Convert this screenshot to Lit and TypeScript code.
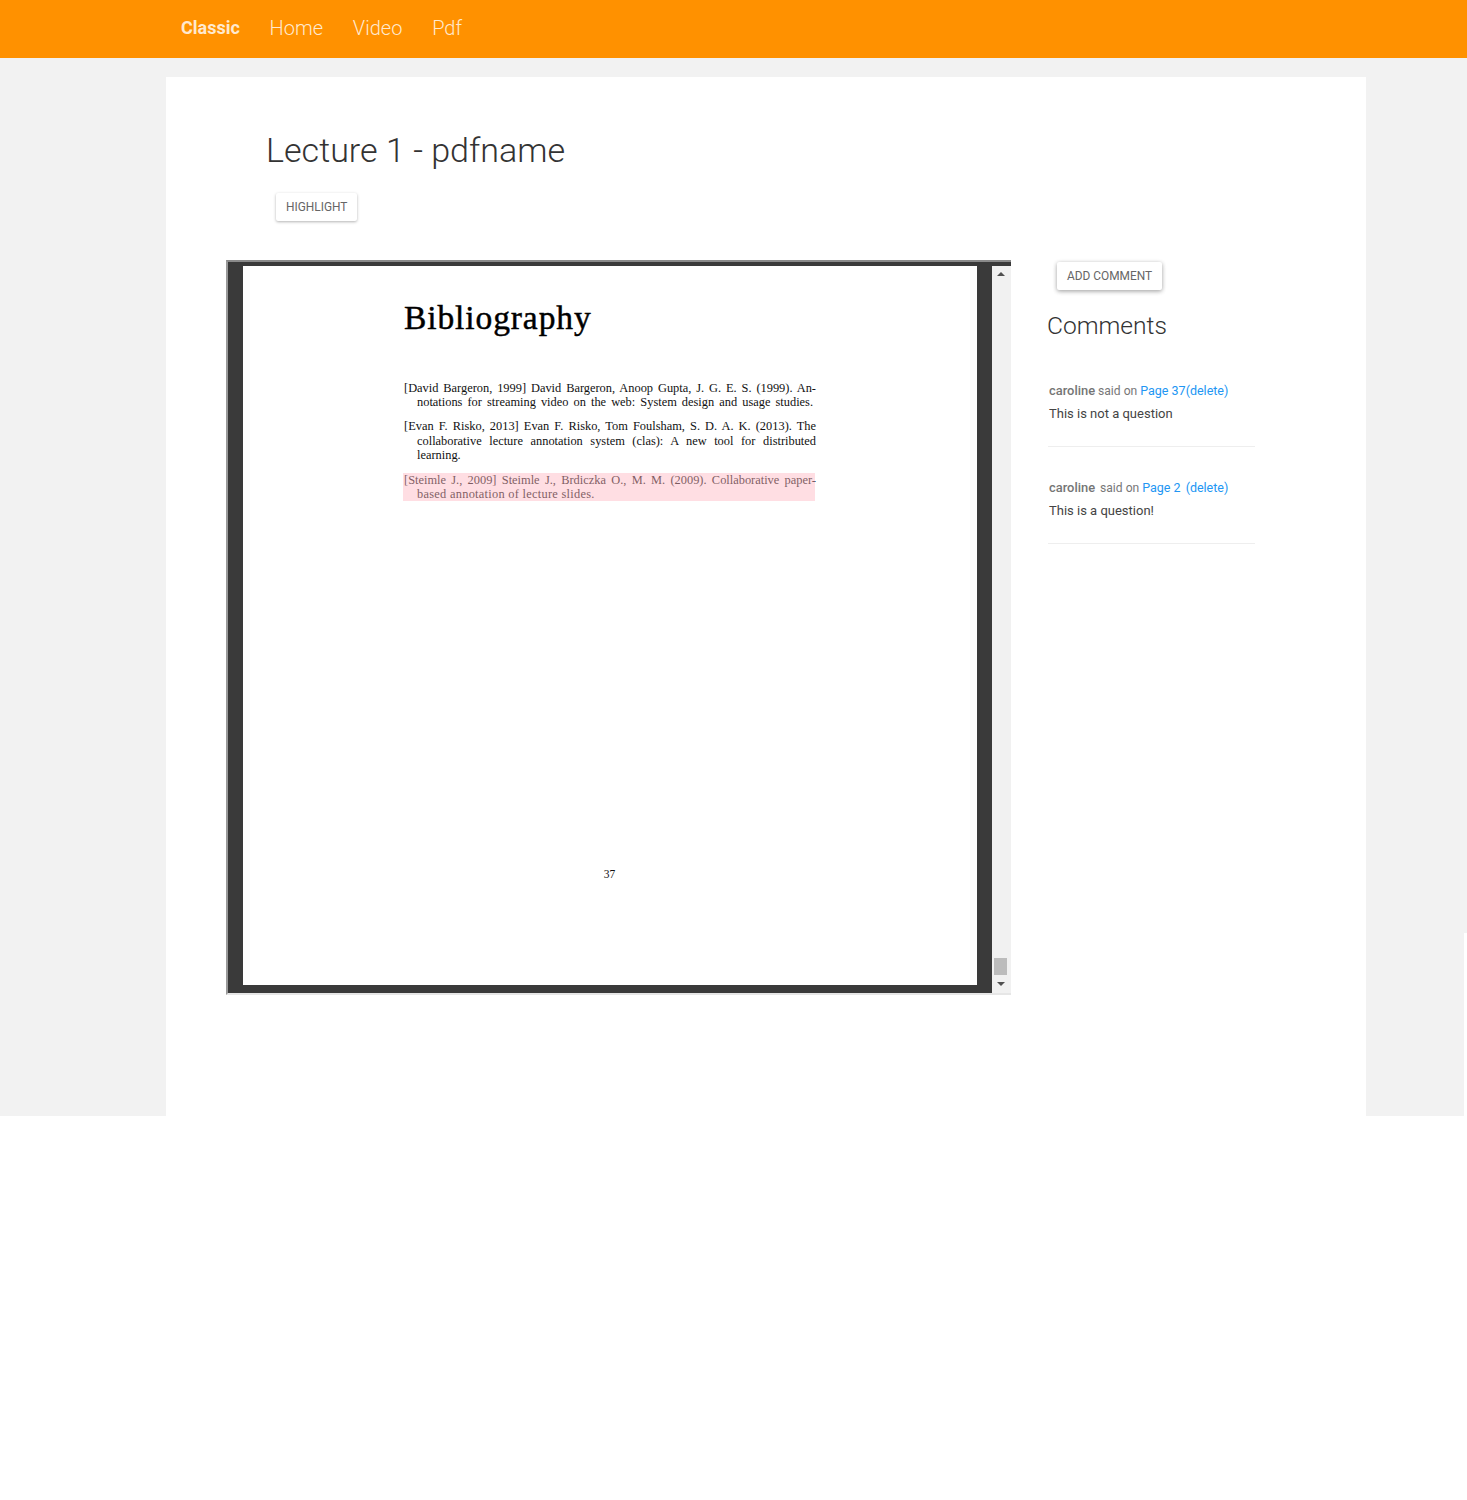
import { LitElement, html, css } from "lit";
import { customElement } from "lit/decorators.js";

const Line = (t: string, cls = "") => html`<div class="ln ${cls}">${t}</div>`;

@customElement("app-root")
export class AppRoot extends LitElement {
  static styles = css`
    :host { display: block; font-family: Roboto, sans-serif; background: #fff; height: 1500px; position: relative; }
    .bg { background: #f2f2f2; height: 1116px; display: flex; flex-direction: column; }
    header { background: #ff9100; height: 58px; display: flex; align-items: center; padding-left: 181px; gap: 29.8px; color: #ffe9cf; flex: none; }
    header a { font-size: 20px; font-weight: 300; line-height: 56px; box-sizing: border-box; height: 58px; }
    header a.brand { font-size: 18px; font-weight: 700; }
    .wrap { margin: 19px 0 0 166px; width: 1200px; height: 1039px; background: #fff; box-sizing: border-box; padding: 51px 0 0 60px; }
    h1 { margin: 0 0 0 40px; font-size: 34.1px; line-height: 44px; font-weight: 300; color: #333; }
    .btn { display: inline-block; background: #fff; color: #666; font-size: 11.9px; line-height: 28px; height: 28px; padding: 0 10px; border-radius: 2px; box-shadow: 0 1px 3px rgba(0,0,0,.3); }
    .hl { margin: 21px 0 39px 50px; }
    .row { display: flex; align-items: flex-start; }
    .viewer { width: 785px; height: 735px; box-sizing: border-box; display: flex; background: #3a3a3a; border-left: 2px solid #999; border-top: 2px solid #8a8a8a; border-bottom: 2px solid #e6e6e6; }
    .dark { width: 764px; padding: 4px 0 8px 15px; box-sizing: border-box; flex: none; height: 100%; }
    .pg { width: 734px; height: 719px; background: #fff; box-sizing: border-box; padding: 35px 0 0 161px; font-family: "Liberation Serif", serif; color: #111; position: relative; }
    .pg h2 { margin: 0; font-size: 33.5px; line-height: 34px; font-weight: 400; color: #000; letter-spacing: .9px; -webkit-text-stroke: .45px #000; font-family: "Liberation Serif", serif; }
    .bib { margin-top: 46px; width: 412px; font-size: 12.4px; line-height: 14px; display: flex; flex-direction: column; gap: 10px; }
    .mid { line-height: 14.5px; }
    .ln { text-align: justify; text-align-last: justify; white-space: nowrap; }
    .ln.in { padding-left: 13px; }
    .ln.short { padding-right: 3px; }
    .ln.end { text-align-last: left; }
    .ln.wide { letter-spacing: .27px; }
    .mark { position: absolute; left: 160px; top: 207px; width: 412px; height: 28px; background: rgba(255,182,193,.45); }
    .no { position: absolute; left: 0; width: 733px; top: 601px; text-align: center; font-size: 11.5px; line-height: 14px; }
    .sb { flex: 1; background: #f1f1f1; margin-top: 4px; padding-right: 2px; display: flex; flex-direction: column; align-items: center; position: relative; }
    .up { width: 0; height: 0; border: 4px solid transparent; border-top: 0; border-bottom: 4px solid #505050; margin-top: 6px; }
    .thumb { width: 13px; height: 17px; background: #bcbcbc; margin-top: auto; }
    .dn { width: 0; height: 0; border: 4px solid transparent; border-bottom: 0; border-top: 4px solid #505050; margin: 7px 0 7px; }
    aside { width: 250px; margin-left: 36px; }
    .add { margin: 2px 0 0 10px; box-shadow: 0 1px 4px rgba(0,0,0,.3), 0 2px 5px rgba(0,0,0,.1); }
    h3 { margin: 19px 0 0 0; font-size: 24.6px; line-height: 33px; font-weight: 300; color: #333; }
    .c { margin: 0 0 15px 1px; width: 207px; border-bottom: 1px solid #eee; height: 82px; box-sizing: border-box; }
    .c.first { margin-top: 23px; }
    .c .m { padding: 16px 0 0 1px; line-height: 20px; color: #777; font-size: 12.1px; white-space: pre; }
    .c .m b { font-weight: 500; font-size: 12.9px; color: #757575; }
    .c .m span { color: #2196f3; font-size: 12.5px; }
    .c .m .said { font-style: normal; }
    .c .m .g { margin-left: 2px; }
    .c .t { padding: 3px 0 0 1px; line-height: 20px; color: #444; font-size: 13px; }
    .strip { position: absolute; right: 0; top: 933px; width: 3px; height: 183px; background: #fff; }
  `;

  render() {
    return html`
      <div class="bg">
        <header>
          <a class="brand">Classic</a><a>Home</a><a>Video</a><a>Pdf</a>
        </header>
        <div class="wrap">
          <h1>Lecture 1 - pdfname</h1>
          <div class="hl"><span class="btn">HIGHLIGHT</span></div>
          <div class="row">
            <div class="viewer">
              <div class="dark">
                <div class="pg">
                  <h2>Bibliography</h2>
                  <div class="bib">
                    <div>
                      ${Line("[David Bargeron, 1999] David Bargeron, Anoop Gupta, J. G. E. S. (1999). An-")}
                      ${Line("notations for streaming video on the web: System design and usage studies.", "in short")}
                    </div>
                    <div class="mid">
                      ${Line("[Evan F. Risko, 2013] Evan F. Risko, Tom Foulsham, S. D. A. K. (2013). The")}
                      ${Line("collaborative lecture annotation system (clas): A new tool for distributed", "in")}
                      ${Line("learning.", "in end")}
                    </div>
                    <div>
                      ${Line("[Steimle J., 2009] Steimle J., Brdiczka O., M. M. (2009). Collaborative paper-")}
                      ${Line("based annotation of lecture slides.", "in end wide")}
                    </div>
                  </div>
                  <div class="mark"></div>
                  <div class="no">37</div>
                </div>
              </div>
              <div class="sb"><i class="up"></i><i class="thumb"></i><i class="dn"></i></div>
            </div>
            <aside>
              <span class="btn add">ADD COMMENT</span>
              <h3>Comments</h3>
              <div class="c first">
                <div class="m"><b>caroline</b> said on <span>Page 37</span><span>(delete)</span></div>
                <div class="t">This is not a question</div>
              </div>
              <div class="c">
                <div class="m"><b>caroline</b> <i class="said g">said on</i> <span>Page 2</span> <span class="g">(delete)</span></div>
                <div class="t">This is a question!</div>
              </div>
            </aside>
          </div>
        </div>
      </div>
      <div class="strip"></div>
    `;
  }
}
